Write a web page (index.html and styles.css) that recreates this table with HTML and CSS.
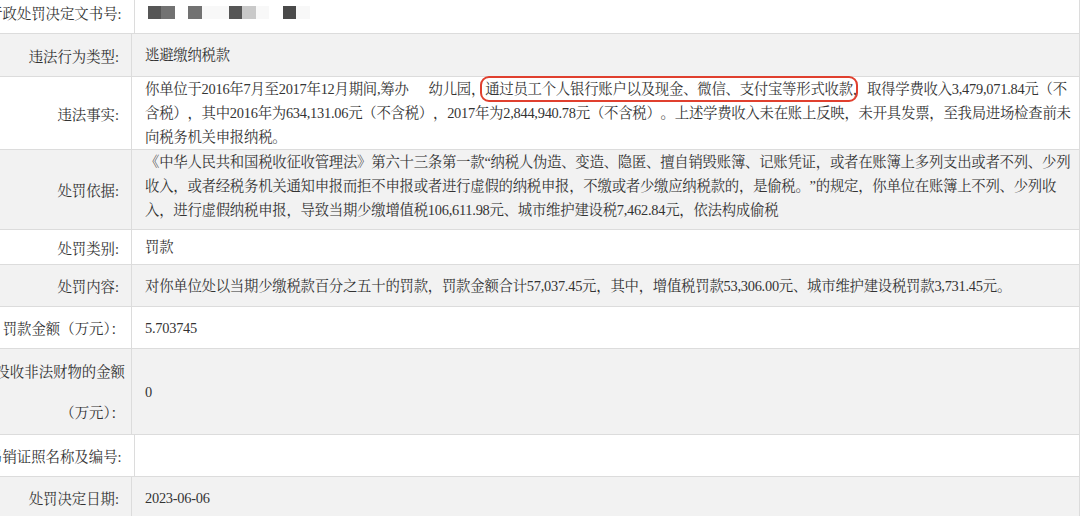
FILE: index.html
```html
<html>
  <head>
    <meta charset="utf-8">
    <link rel="stylesheet" href="styles.css">
  </head>
  <body>
    <div class="sheet">
      <div class="row">
        <div class="label">行政处罚决定文书号:</div>
        <div class="value">
          <div class="mosaic">
            <span class="tile t-dark"></span><span class="tile t-mid"></span>
            <span class="tile t-gap"></span>
            <span class="tile t-mid"></span><span class="tile t-faint"></span><span class="tile t-faint"></span>
            <span class="tile t-dark"></span><span class="tile t-light"></span><span class="tile t-faint"></span>
            <span class="tile t-gap"></span>
            <span class="tile t-darker"></span><span class="tile t-faint"></span>
          </div>
        </div>
      </div>
      <div class="row row-mid">
        <div class="label">违法行为类型:</div>
        <div class="value"><p>逃避缴纳税款</p></div>
      </div>
      <div class="row">
        <div class="label">违法事实:</div>
        <div class="value">
          <p>你单位于2016年7月至2017年12月期间,筹办<span class="hidden-name"></span>幼儿园，<span class="mark">通过员工个人银行账户以及现金、微信、支付宝等形式收款</span>，取得学费收入3,479,071.84元（不含税），其中2016年为634,131.06元（不含税），2017年为2,844,940.78元（不含税）。上述学费收入未在账上反映，未开具发票，至我局进场检查前未向税务机关申报纳税。</p>
        </div>
      </div>
      <div class="row">
        <div class="label">处罚依据:</div>
        <div class="value value-top">
          <p>《中华人民共和国税收征收管理法》第六十三条第一款“纳税人伪造、变造、隐匿、擅自销毁账簿、记账凭证，或者在账簿上多列支出或者不列、少列收入，或者经税务机关通知申报而拒不申报或者进行虚假的纳税申报，不缴或者少缴应纳税款的，是偷税。”的规定，你单位在账簿上不列、少列收入，进行虚假纳税申报，导致当期少缴增值税106,611.98元、城市维护建设税7,462.84元，依法构成偷税</p>
        </div>
      </div>
      <div class="row row-short">
        <div class="label">处罚类别:</div>
        <div class="value"><p>罚款</p></div>
      </div>
      <div class="row">
        <div class="label">处罚内容:</div>
        <div class="value"><p>对你单位处以当期少缴税款百分之五十的罚款，罚款金额合计57,037.45元，其中，增值税罚款53,306.00元、城市维护建设税罚款3,731.45元。</p></div>
      </div>
      <div class="row">
        <div class="label label-paren">罚款金额（万元）：</div>
        <div class="value"><p>5.703745</p></div>
      </div>
      <div class="row row-tall">
        <div class="label label-wrap label-paren">没收非法财物的金额<br>（万元）：</div>
        <div class="value"><p>0</p></div>
      </div>
      <div class="row">
        <div class="label">吊销证照名称及编号:</div>
        <div class="value"><p></p></div>
      </div>
      <div class="row">
        <div class="label">处罚决定日期:</div>
        <div class="value"><p>2023-06-06</p></div>
      </div>
    </div>
  </body>
</html>
```

FILE: styles.css
```css
body {
  margin: 0;
  background: #fff;
  color: #333;
  font-family: "Liberation Serif", "Noto Serif CJK SC", "Noto Sans CJK SC", serif;
  font-size: 14.4px;
  overflow: hidden;
}

.sheet {
  margin: -8px 0 0 -12px;
  border-right: 1px solid #dcdcdc;
}

.row {
  display: flex;
  min-height: 42px;
  box-sizing: border-box;
  border-bottom: 1px solid #dcdcdc;
}
.row:nth-child(even) {
  background: #f2f2f2;
}
.row-mid {
  min-height: 43px;
}
.row-short {
  min-height: 35px;
}
.row-tall {
  min-height: 86px;
}

.label {
  flex: 0 0 144px;
  box-sizing: border-box;
  border-right: 1px solid #dcdcdc;
  padding-right: 12px;
  display: flex;
  align-items: center;
  justify-content: flex-end;
  text-align: right;
  white-space: nowrap;
}
.label-wrap {
  line-height: 41px;
  padding-top: 2px;
}
.label-paren {
  padding-right: 6px;
}

.value {
  flex: 1;
  min-width: 0;
  padding: 0 2px 0 13px;
  display: flex;
  align-items: center;
  line-height: 24px;
}
.value p {
  margin: 0;
  letter-spacing: -0.25px;
  text-spacing-trim: space-all;
}
.value-top {
  padding-bottom: 7px;
}

.mosaic {
  display: flex;
}
.tile {
  width: 13.5px;
  height: 13px;
}
.t-darker { background: #4a4a4a; }
.t-dark { background: #565656; }
.t-mid { background: #727272; }
.t-light { background: #c9c9c9; }
.t-faint { background: #f8f8f8; }
.t-gap { width: 13.5px; }

.hidden-name {
  display: inline-block;
  width: 20px;
}

.mark {
  outline: 2px solid #e0402f;
  outline-offset: 3px;
  border-radius: 4px;
}
```
